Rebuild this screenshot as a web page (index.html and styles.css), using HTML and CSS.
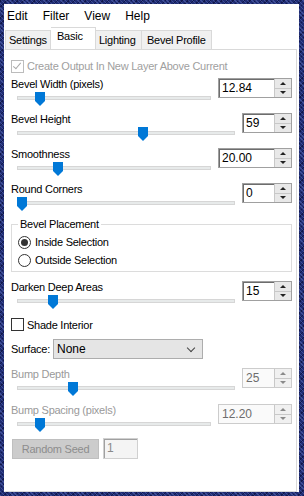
FILE: index.html
```html
<!DOCTYPE html>
<html lang="en">
<head>
    <meta charset="UTF-8">
    <title>Inner Bevel</title>
    <link rel="stylesheet" href="styles.css">
</head>
<body>
    <div class="window">
        <div class="menubar">
            <span class="menu-item">Edit</span>
            <span class="menu-item">Filter</span>
            <span class="menu-item">View</span>
            <span class="menu-item">Help</span>
        </div>

        <div class="tabs">
            <div class="tab tab-settings">Settings</div>
            <div class="tab tab-basic active">Basic</div>
            <div class="tab tab-lighting">Lighting</div>
            <div class="tab tab-profile">Bevel Profile</div>
        </div>

        <div class="panel">
            <div class="check-row disabled">
                <span class="checkbox checked"></span>
                <span>Create Output In New Layer Above Current</span>
            </div>

            <div class="param">
                <div class="param-label">Bevel Width (pixels)</div>
                <div class="spin wide"><span class="spin-field">12.84</span><span class="spin-buttons"><span class="up"></span><span class="down"></span></span></div>
                <div class="slider"><div class="track"></div><div class="thumb" style="left: 18px"></div></div>
            </div>

            <div class="param">
                <div class="param-label">Bevel Height</div>
                <div class="spin"><span class="spin-field">59</span><span class="spin-buttons"><span class="up"></span><span class="down"></span></span></div>
                <div class="slider"><div class="track"></div><div class="thumb" style="left: 121px"></div></div>
            </div>

            <div class="param">
                <div class="param-label">Smoothness</div>
                <div class="spin wide"><span class="spin-field">20.00</span><span class="spin-buttons"><span class="up"></span><span class="down"></span></span></div>
                <div class="slider"><div class="track"></div><div class="thumb" style="left: 36px"></div></div>
            </div>

            <div class="param">
                <div class="param-label">Round Corners</div>
                <div class="spin"><span class="spin-field">0</span><span class="spin-buttons"><span class="up"></span><span class="down"></span></span></div>
                <div class="slider"><div class="track"></div><div class="thumb" style="left: 0px"></div></div>
            </div>

            <fieldset class="group">
                <legend>Bevel Placement</legend>
                <div class="radio-row"><span class="radio checked"></span>Inside Selection</div>
                <div class="radio-row"><span class="radio"></span>Outside Selection</div>
            </fieldset>

            <div class="param param-darken">
                <div class="param-label">Darken Deep Areas</div>
                <div class="spin"><span class="spin-field">15</span><span class="spin-buttons"><span class="up"></span><span class="down"></span></span></div>
                <div class="slider"><div class="track"></div><div class="thumb" style="left: 31px"></div></div>
            </div>

            <div class="check-row shade">
                <span class="checkbox"></span>
                <span>Shade Interior</span>
            </div>

            <div class="surface-row">
                <span class="surface-label">Surface:</span>
                <div class="select"><span>None</span><span class="chevron"></span></div>
            </div>

            <div class="param param-bump disabled">
                <div class="param-label">Bump Depth</div>
                <div class="spin"><span class="spin-field">25</span><span class="spin-buttons"><span class="up"></span><span class="down"></span></span></div>
                <div class="slider"><div class="track"></div><div class="thumb" style="left: 51px"></div></div>
            </div>

            <div class="param param-spacing disabled">
                <div class="param-label">Bump Spacing (pixels)</div>
                <div class="spin wide"><span class="spin-field">12.20</span><span class="spin-buttons"><span class="up"></span><span class="down"></span></span></div>
                <div class="slider"><div class="track"></div><div class="thumb" style="left: 18px"></div></div>
            </div>

            <div class="seed-row">
                <button class="seed-button" disabled>Random Seed</button>
                <span class="seed-input">1</span>
            </div>
        </div>
    </div>
</body>
</html>
```

FILE: styles.css
```css
body { margin: 0; width: 304px; height: 496px; overflow: hidden; font-family: "Liberation Sans", Arial, sans-serif; font-size: 11px; letter-spacing: -0.25px; color: #000;
       background-color: #1f2c72;
       background-image: repeating-linear-gradient(45deg, rgba(120,140,220,0.35) 0 1px, transparent 1px 3px),
                         repeating-linear-gradient(-45deg, rgba(0,0,30,0.45) 0 1px, transparent 1px 4px); }
.window { margin: 4px 5px 4px 4px; height: 488px; background: #fff; display: flex; flex-direction: column; }

.menubar { height: 23px; display: flex; align-items: center; padding-left: 3px; font-size: 12px; letter-spacing: 0; }
.menu-item { margin-right: 15px; }

.tabs { display: flex; align-items: flex-end; height: 22px; padding-left: 1px; }
.tab { height: 19px; line-height: 18px; background: #f0f0f0; border: 1px solid #d9d9d9; border-bottom: none; box-sizing: border-box; }
.tab + .tab { border-left: none; }
.tab.active { height: 22px; line-height: 17px; background: #fff; }
.tab-settings { width: 46px; padding-left: 3px; }
.tab-basic { width: 45px; padding-left: 6px; }
.tab-lighting { width: 46px; padding-left: 3px; }
.tab-profile { width: 70px; padding-left: 5px; }

.panel { flex: 1; border: 1px solid #d9d9d9; border-left-color: #fff; margin-right: 2px; padding: 0 4px 0 6px; }

.check-row { display: flex; align-items: center; height: 16px; margin-top: 8px; gap: 3px; }
.check-row.disabled { color: #a0a0a0; }
.checkbox { width: 11px; height: 11px; border: 1px solid #333; background: #fff; position: relative; }
.check-row.disabled .checkbox { border-color: #bcbcbc; }
.checkbox.checked::after { content: ""; position: absolute; left: 3px; top: 0px; width: 3px; height: 7px; border: solid #a8a8a8; border-width: 0 1.5px 1.5px 0; transform: rotate(40deg); }

.param { display: grid; grid-template-columns: 1fr auto; grid-template-rows: 16px 19px; column-gap: 7px; margin-top: 2px; }
.param + .param { margin-top: 0; }
.param-label { line-height: 16px; grid-column: 1; grid-row: 1; }
.param.disabled .param-label { color: #9a9a9a; }
.slider { grid-column: 1; grid-row: 2; position: relative; margin-left: 6px; }
.track { margin-top: 4px; height: 2px; background: #e7eaea; border: 1px solid #d6d6d6; }
.thumb { position: absolute; top: 0; width: 10px; height: 9px; background: #0078d7; }
.thumb::after { content: ""; position: absolute; top: 9px; left: 0; border-left: 5px solid transparent; border-right: 5px solid transparent; border-top: 5px solid #0078d7; }

.spin { grid-column: 2; grid-row: 1 / span 2; align-self: start; margin-top: 2px; width: 50px; height: 20px; display: flex; box-sizing: border-box; border: 1px solid #a0a0a0; }
.spin.wide { width: 74px; }
.spin-field { flex: 1; line-height: 18px; padding-left: 3px; font-size: 12px; letter-spacing: 0; box-shadow: inset 1px 1px 0 #6d6d6d; }
.spin-buttons { width: 16px; display: flex; flex-direction: column; border-left: 1px solid #c8c8c8; }
.spin-buttons span { flex: 1; background: #e8e8e8; position: relative; }
.spin-buttons .up { border-bottom: 1px solid #c8c8c8; }
.spin-buttons span::after { content: ""; position: absolute; left: 5px; border-left: 3px solid transparent; border-right: 3px solid transparent; }
.spin-buttons .up::after { top: 3px; border-bottom: 3px solid #222; }
.spin-buttons .down::after { top: 2px; border-top: 3px solid #222; }
.param.disabled .spin { border-color: #cccccc; }
.param.disabled .spin-field { color: #6d6d6d; box-shadow: none; background: #fafafa; }
.param.disabled .spin-buttons span { background: #f0f0f0; }
.param.disabled .spin-buttons span::after { border-top-color: #8a8a8a; border-bottom-color: #8a8a8a; }

.group { margin: 0; padding: 1px 6px 2px; border: 1px solid #dcdcdc; }
.group legend { padding: 0 2px; line-height: 16px; }
.radio-row { display: flex; align-items: center; height: 18px; gap: 4px; }
.radio { width: 11px; height: 11px; border: 1px solid #333; border-radius: 50%; position: relative; }
.radio.checked::after { content: ""; position: absolute; left: 2px; top: 2px; width: 7px; height: 7px; border-radius: 50%; background: #333; }

.param-darken { margin-top: 7px; }
.shade { margin-top: 2px; height: 17px; }

.surface-row { display: flex; align-items: center; margin-top: 6px; }
.surface-label { width: 42px; }
.select { width: 150px; height: 20px; box-sizing: border-box; background: #e5e5e5; border: 1px solid #adadad; display: flex; align-items: center; justify-content: space-between; padding: 0 8px 0 3px; font-size: 12px; letter-spacing: 0; }
.chevron { width: 5px; height: 5px; border: solid #444; border-width: 0 1px 1px 0; transform: rotate(45deg); margin-top: -3px; }

.param-bump { margin-top: 7px; }
.param-spacing { margin-top: 1px !important; }

.seed-row { display: flex; align-items: center; gap: 4px; margin-top: 1px; padding-left: 1px; }
.seed-button { width: 87px; height: 20px; font-family: inherit; font-size: 11px; letter-spacing: -0.25px; color: #8c8c8c; background: #cccccc; border: 1px solid #bfbfbf; padding: 0; }
.seed-input { width: 35px; height: 21px; line-height: 19px; padding-left: 3px; box-sizing: border-box; border: 1px solid #d0d0d0; box-shadow: inset 1px 1px 0 #a0a0a0; color: #8a8a8a; background: #f4f4f4; font-size: 12px; letter-spacing: 0; }
```
